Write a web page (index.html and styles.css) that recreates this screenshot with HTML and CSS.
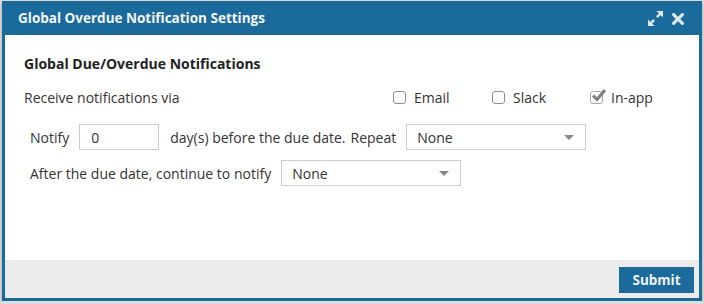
FILE: index.html
```html
<!DOCTYPE html>
<html lang="en">
<head>
    <meta charset="UTF-8">
    <title>Global Overdue Notification Settings</title>
    <link rel="stylesheet" href="styles.css">
</head>
<body>
    <div class="dialog">
        <div class="dialogHeader">
            <span class="dialogTitle">Global Overdue Notification Settings</span>
            <div class="headerIcons">
                <svg class="iconExpand" width="15" height="15" viewBox="0 0 16 16">
                    <polygon points="16,0 16,7 9,0" fill="currentColor"/>
                    <polygon points="0,16 0,9 7,16" fill="currentColor"/>
                    <line x1="13" y1="3" x2="9.5" y2="6.5" stroke="currentColor" stroke-width="2.6"/>
                    <line x1="3" y1="13" x2="6.5" y2="9.5" stroke="currentColor" stroke-width="2.6"/>
                </svg>
                <svg class="iconClose" width="12" height="12" viewBox="0 0 12 12">
                    <line x1="1.6" y1="1.6" x2="10.4" y2="10.4" stroke="currentColor" stroke-width="3.2" stroke-linecap="round"/>
                    <line x1="10.4" y1="1.6" x2="1.6" y2="10.4" stroke="currentColor" stroke-width="3.2" stroke-linecap="round"/>
                </svg>
            </div>
        </div>

        <div class="dialogBody">
            <p class="sectionTitle">Global Due/Overdue Notifications</p>

            <div class="channelRow">
                <span>Receive notifications via</span>
                <label class="option"><span class="box"></span>Email</label>
                <label class="option"><span class="box"></span>Slack</label>
                <label class="option"><span class="box checked">
                    <svg width="17" height="15" viewBox="0 0 17 15">
                        <polyline points="3,7.5 7,11.5 15,2" fill="none" stroke="#7d7d7d" stroke-width="3"/>
                    </svg>
                </span>In-app</label>
            </div>

            <div class="formRow">
                <span>Notify</span>
                <div class="textInput">0</div>
                <span class="daysText">day(s) before the due date.</span>
                <span>Repeat</span>
                <div class="selectBox"><span>None</span><span class="caret"></span></div>
            </div>

            <div class="formRow">
                <span>After the due date, continue to notify</span>
                <div class="selectBox"><span>None</span><span class="caret"></span></div>
            </div>
        </div>

        <div class="dialogFooter">
            <button class="submitBtn">Submit</button>
        </div>
    </div>
</body>
</html>
```

FILE: styles.css
```css
body{
    margin: 0;
    padding: 1px 2px 0;
    background-color: #dcdcdc;
    font-family: 'Open Sans', sans-serif;
    font-size: 14px;
    color: #333;
}

.dialog{
    width: 700px;
    height: 300px;
    box-sizing: border-box;
    border: 3px solid #1b6a9c;
    border-top: none;
    background-color: #fff;
    display: flex;
    flex-direction: column;
    box-shadow: 0 2px 3px rgba(0, 0, 0, 0.25);
}

.dialogHeader{
    height: 34px;
    margin: 0 -3px;
    padding: 0 18px 0 16px;
    background-color: #1b6a9c;
    color: #fff;
    display: flex;
    align-items: center;
    justify-content: space-between;
}

.dialogTitle{
    font-size: 13.5px;
    font-weight: bold;
    color: #f2f6fa;
}

.headerIcons{
    display: flex;
    align-items: center;
    gap: 9px;
    color: #dde7f0;
    padding-top: 1px;
}

.dialogBody{
    flex: 1;
    padding: 20px 19px 0;
}

.sectionTitle{
    margin: 0;
    font-weight: bold;
    color: #222;
    line-height: 18px;
}

.channelRow{
    display: grid;
    grid-template-columns: 369px 99px 98px auto;
    align-items: center;
    height: 26px;
    margin-top: 11px;
}

.option{
    display: flex;
    align-items: center;
    gap: 8px;
}

.box{
    width: 13px;
    height: 13px;
    box-sizing: border-box;
    border: 1.5px solid #8d8d8d;
    border-radius: 3px;
    position: relative;
}

.box.checked{
    border-color: #a8a8a8;
}

.box svg{
    position: absolute;
    left: -1px;
    top: -4px;
}

.formRow{
    display: flex;
    align-items: center;
    gap: 10px;
    height: 26px;
    margin-left: 6px;
    margin-top: 14px;
}

.formRow + .formRow{
    margin-top: 10px;
}

.textInput{
    width: 80px;
    height: 26px;
    box-sizing: border-box;
    border: 1px solid #ccc;
    padding: 0 11px;
    display: flex;
    align-items: center;
}

.daysText{
    margin-left: 1px;
    margin-right: -5px;
}

.selectBox{
    width: 180px;
    height: 26px;
    box-sizing: border-box;
    border: 1px solid #ccc;
    padding: 0 11px 0 10px;
    display: flex;
    align-items: center;
    justify-content: space-between;
}

.caret{
    width: 0;
    height: 0;
    border-left: 5px solid transparent;
    border-right: 5px solid transparent;
    border-top: 5px solid #888;
}

.dialogFooter{
    height: 38px;
    background-color: #ebebeb;
    display: flex;
    align-items: center;
    justify-content: flex-end;
    padding-right: 5px;
}

.submitBtn{
    width: 75px;
    height: 26px;
    border: none;
    background-color: #1b6a9c;
    color: #eef3f8;
    font-family: 'Open Sans', sans-serif;
    font-size: 13.5px;
    font-weight: bold;
    margin-top: 1px;
}
```
